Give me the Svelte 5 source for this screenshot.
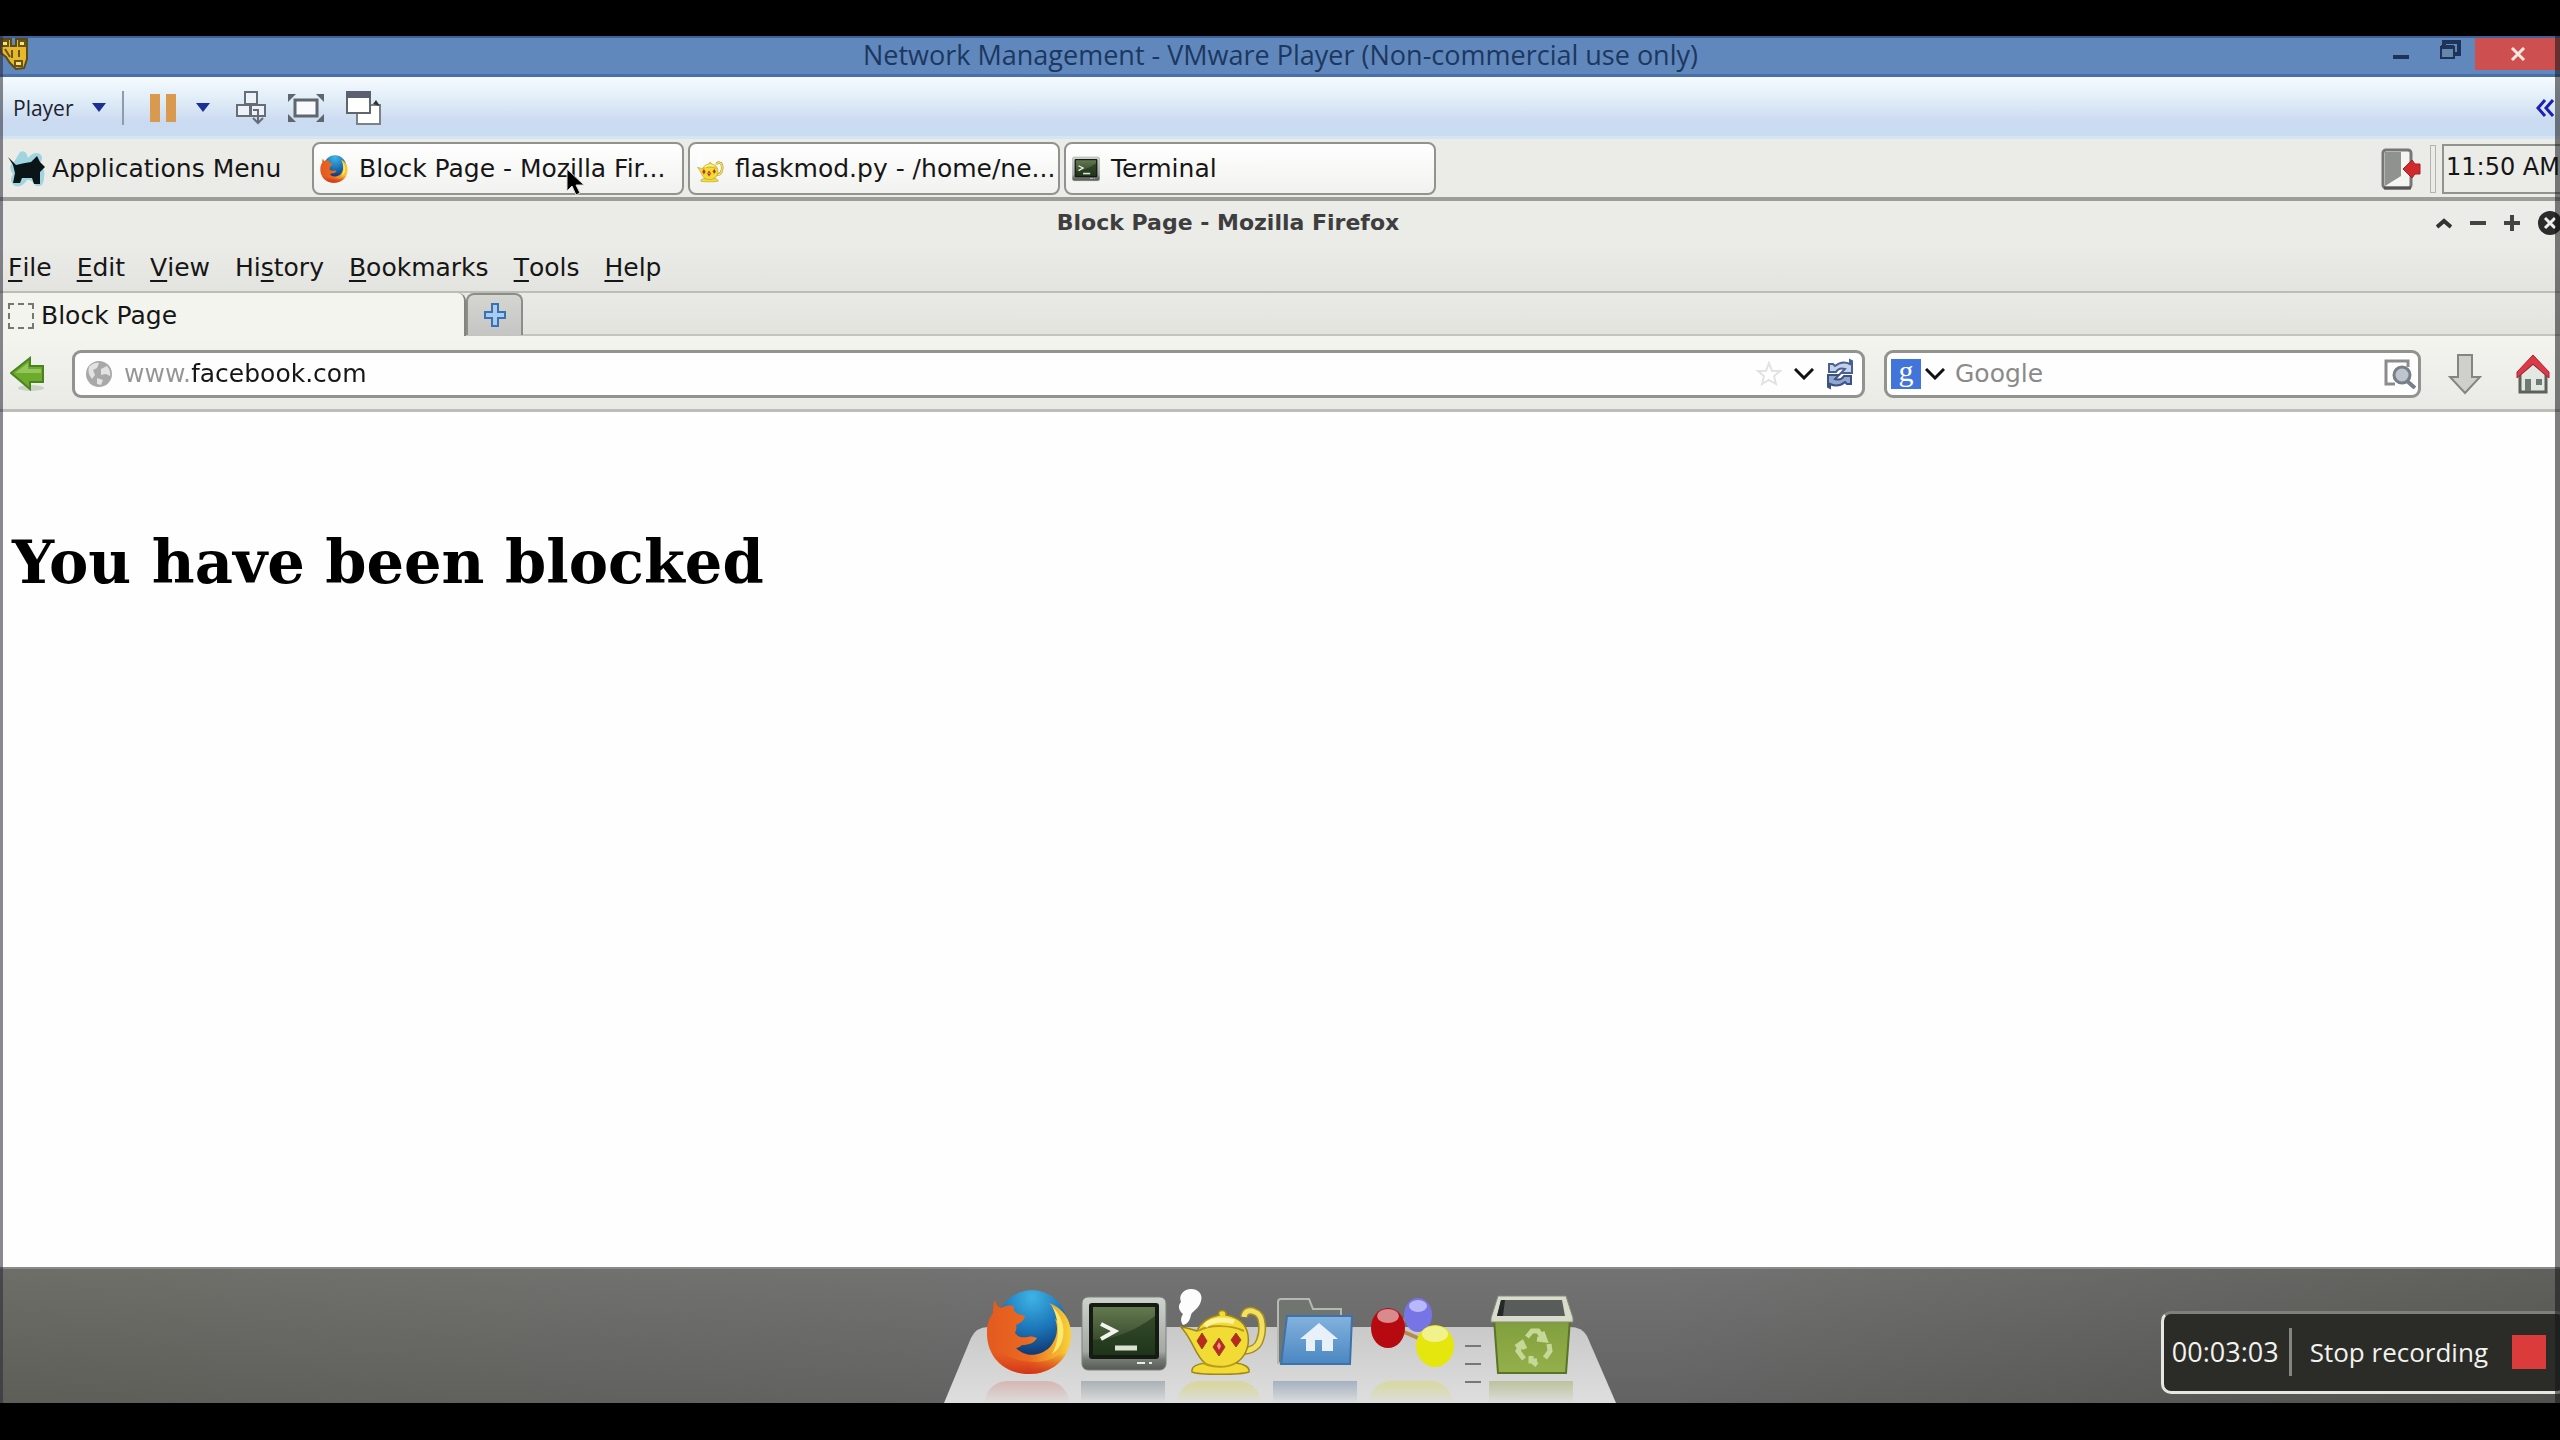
<script>
  const menus = [
    ['', 'F', 'ile'],
    ['', 'E', 'dit'],
    ['', 'V', 'iew'],
    ['Hi', 's', 'tory'],
    ['', 'B', 'ookmarks'],
    ['', 'T', 'ools'],
    ['', 'H', 'elp']
  ];
  let url = $state('www.facebook.com');
  let query = $state('');
</script>

{#snippet firefox()}
  <svg viewBox="0 0 86 86" aria-hidden="true">
    <defs>
      <radialGradient id="ffGlobe" cx=".5" cy=".1" r=".95"><stop offset="0" stop-color="#3fb4e6" /><stop offset=".5" stop-color="#1b74b8" /><stop offset="1" stop-color="#0e2358" /></radialGradient>
      <linearGradient id="ffFur" x1="0" y1="0" x2="1" y2="0"><stop offset="0" stop-color="#e4591f" /><stop offset=".5" stop-color="#ea6a22" /><stop offset=".8" stop-color="#f4ab2c" /><stop offset="1" stop-color="#f6d33c" /></linearGradient>
      <linearGradient id="ffLow" x1="0" y1="0" x2="0" y2="1"><stop offset=".5" stop-color="#d93a1c" stop-opacity="0" /><stop offset="1" stop-color="#cf3418" /></linearGradient>
    </defs>
    <circle cx="46" cy="36" r="35" fill="url(#ffGlobe)" />
    <path d="M9 11c1 5 3 7 6 8 5-3 9-3 13-2-1 4 0 6 4 8 3 1 5 1 7 2-1 5-5 7-9 9 1 3 0 5-1 8 3 4 7 5 13 4 3-1 6 0 9 1-3 5-8 7-15 7-2 2-4 3-6 3 10 10 24 8 33 0 8-8 10-20 6-29 2 1 3 3 4 5-1-9-4-15-10-21C76 19 86 30 85 48c-2 24-21 37-42 37C17 85 0 67 1 42c0-8 3-14 6-18 0-5 0-9 2-13z" fill="url(#ffFur)" />
    <path d="M1 42c0 26 18 43 42 43 21 0 40-13 42-37-6 16-18 25-36 25C27 73 10 64 1 42z" fill="url(#ffLow)" />
    <path d="M66 17c9 9 13 20 11 31-1 7-5 13-11 17 7-12 9-30 0-48z" fill="#fbe96b" />
  </svg>
{/snippet}

{#snippet terminal()}
  <svg viewBox="0 0 86 76" aria-hidden="true">
    <defs>
      <linearGradient id="tCase" x1="0" y1="0" x2="0" y2="1"><stop offset="0" stop-color="#cfd3cf" /><stop offset=".75" stop-color="#a3a8a3" /><stop offset=".86" stop-color="#747974" /><stop offset="1" stop-color="#555a55" /></linearGradient>
      <linearGradient id="tGlass" x1="0" y1="0" x2="0" y2="1"><stop offset="0" stop-color="#64794f" /><stop offset="1" stop-color="#25391f" /></linearGradient>
    </defs>
    <rect x="1" y="1" width="84" height="73" rx="6" fill="url(#tCase)" stroke="#7d817d" />
    <rect x="8" y="7" width="70" height="56" rx="3" fill="#151b12" />
    <rect x="12" y="11" width="62" height="48" fill="url(#tGlass)" />
    <path d="M12 59V44c22-1 42-9 62-24v39z" fill="#1d3318" opacity=".6" />
    <path d="M20 28l14 7-14 8" fill="none" stroke="#f2f5ee" stroke-width="4" />
    <path d="M34 52h22" stroke="#dbe2d2" stroke-width="5" />
    <path d="M56 67h8m4 0h3" stroke="#e8ece4" stroke-width="2" />
  </svg>
{/snippet}

{#snippet teapot()}
  <svg viewBox="0 0 92 86" aria-hidden="true">
    <path d="M7 36c-3-4-2-8 0-11-5-4-5-9-2-12-3-7 3-13 10-13 8 0 12 6 10 12-2 8-9 10-10 14-1 5-3 9-8 10z" fill="#fdfdfd" />
    <path d="M68 28c1-7 6-7 11-5 9 3 8 20 5 28-2 7-9 11-18 11" fill="none" stroke="#a58e20" stroke-width="8" />
    <path d="M68 28c1-7 6-7 11-5 9 3 8 20 5 28-2 7-9 11-18 11" fill="none" stroke="#f3df62" stroke-width="5" />
    <path d="M5 38c9 1 11 3 16 4 4-9 12-14 22-16-3-6 9-6 7 0 11 2 20 8 22 20 2 13-4 23-12 28 8 1 14 4 13 9-9 3-50 3-57 0-1-6 6-8 13-9C20 68 17 51 5 38z" fill="#f3db36" stroke="#9f861c" stroke-width="1.5" />
    <path d="M22 42c12-7 33-6 46 0M27 74c11 5 24 5 33 0" fill="none" stroke="#ba9b1d" stroke-width="2" />
    <path d="M29 37c6-6 18-8 29-4" fill="none" stroke="#fcf39b" stroke-width="5" />
    <path d="M26 44l5 8-5 8-5-8zM43 49l6 9-6 9-6-9zM60 44l5 7-5 7-5-7z" fill="#bd2920" stroke="#8d4a18" />
    <path d="M43 53l2 4-2 4-2-4z" fill="#f29a91" />
  </svg>
{/snippet}

{#snippet folder()}
  <svg viewBox="0 0 76 68" aria-hidden="true">
    <defs><linearGradient id="fold" x1="0" y1="0" x2="0" y2="1"><stop offset="0" stop-color="#83b2de" /><stop offset="1" stop-color="#4b87c2" /></linearGradient></defs>
    <path d="M1 65V4q0-3 3-3h28l4 10h28v54z" fill="#70756f" stroke="#b5b9b4" stroke-width="2" />
    <path d="M10 18h65l-2 48H4z" fill="url(#fold)" stroke="#3d72aa" stroke-width="2" />
    <path d="M42 25l19 16h-5v12H45V42h-7v11H29V41h-6z" fill="#e8f1fa" />
  </svg>
{/snippet}

{#snippet balls()}
  <svg viewBox="0 0 86 72" aria-hidden="true">
    <path d="M20 28l42 18M20 28l28-12M48 16l14 30" stroke="#b88a50" stroke-width="4" />
    <ellipse cx="48" cy="17" rx="14" ry="17" fill="#7775e6" /><ellipse cx="48" cy="8" rx="9" ry="6" fill="#b9b8fa" />
    <ellipse cx="18" cy="30" rx="17" ry="20" fill="#b70a10" /><ellipse cx="18" cy="18" rx="11" ry="7" fill="#d98a8c" />
    <ellipse cx="65" cy="48" rx="19" ry="21" fill="#e5e60d" /><ellipse cx="65" cy="36" rx="13" ry="8" fill="#f2f28d" />
  </svg>
{/snippet}

{#snippet trash()}
  <svg viewBox="0 0 84 80" aria-hidden="true">
    <defs><linearGradient id="bin" x1="0" y1="0" x2="0" y2="1"><stop offset="0" stop-color="#819e3d" /><stop offset="1" stop-color="#93b04b" /></linearGradient></defs>
    <path d="M4 24h76l-4 54H8z" fill="url(#bin)" stroke="#5a7328" stroke-width="2" />
    <path d="M8 1h68l7 22v4H1v-4z" fill="#d9dccb" stroke="#878a7b" />
    <path d="M11 5h61l3 16H7z" fill="#585d5c" /><path d="M11 5l-4 16h6l2-16z" fill="#252828" />
    <path d="M37 42l5-6h6l5 7m-1-6l3 8-8-1M59 49l1 7-5 7M47 66h-6v-5m1 5l5 4M34 64l-6-8 3-6m-5 2l6-4 3 6" fill="none" stroke="#c5d895" stroke-width="5" />
  </svg>
{/snippet}

{#snippet caret()}
  <svg class="caret" viewBox="0 0 14 9" aria-hidden="true"><path d="M0 0h14L7 9z" fill="#1c2f94" /></svg>
{/snippet}

{#snippet chevron()}
  <svg class="chev" viewBox="0 0 20 12" aria-hidden="true"><path d="M1 1l9 9 9-9" fill="none" stroke="#111" stroke-width="3" /></svg>
{/snippet}

<div class="screen">
  <div class="host">
    <header class="titlebar">
      <svg class="vm" viewBox="0 0 28 32" aria-hidden="true">
        <path d="M0 1h11v7h5V1h11v20l-3 9-8 1-6-6-4-6-5-4z" fill="#e6b92d" stroke="#5a4a1c" stroke-width="2" />
        <path d="M2 3h6v5H2zM19 3h6v5h-6zM15 23h7v5h-7zM5 11l5 8M12 12v8M19 12v7" fill="#f8e27a" stroke="#6a5415" stroke-width="2" />
      </svg>
      <h1>Network Management - VMware Player (Non-commercial use only)</h1>
      <div class="winbtns">
        <button aria-label="Minimize"><svg viewBox="0 0 16 20"><path d="M0 15h16v4H0z" fill="#1e3357" /></svg></button>
        <button aria-label="Restore"><svg class="restore" viewBox="0 0 22 20"><path d="M5 5V2h15v12h-4" fill="none" stroke="#1e3357" stroke-width="4" /><path d="M2 7h13v11H2z" fill="#6587ac" stroke="#1e3357" stroke-width="2" /><path d="M2 7h13" stroke="#1e3357" stroke-width="4" /></svg></button>
        <button class="close" aria-label="Close"><svg viewBox="0 0 16 14"><path d="M2 1l12 12M14 1L2 13" stroke="#fbe6df" stroke-width="3" /></svg></button>
      </div>
    </header>

    <div class="toolbar">
      <button class="player">Player {@render caret()}</button>
      <span class="sep"></span>
      <button class="pause" aria-label="Suspend">
        <svg class="bars" viewBox="0 0 26 28"><path d="M0 0h10v28H0zM16 0h10v28H16z" fill="#d99a50" /></svg>
        {@render caret()}
      </button>
      <button aria-label="Send Ctrl+Alt+Del"><svg class="t1" viewBox="0 0 30 34"><path d="M9 1h12v12H9zM1 14h13v11H1zM15 14h14v11H15z" fill="#edf2f8" stroke="#666d76" stroke-width="2" /><path d="M17 19h5v12m-5-4l5 5 5-5" fill="none" stroke="#666d76" stroke-width="2" /></svg></button>
      <button aria-label="Full screen"><svg class="t2" viewBox="0 0 36 28"><path d="M7 6h22v16H7z" fill="#f8fafd" stroke="#5f666e" stroke-width="3" /><path d="M0 0h8L0 8zM36 0h-8l8 8zM0 28h8l-8-8zM36 28h-8l8-8z" fill="#5f666e" /></svg></button>
      <button aria-label="Unity"><svg class="t3" viewBox="0 0 36 34"><path d="M11 14h23v19H11z" fill="#fff" stroke="#7a8189" stroke-width="2" /><path d="M1 1h23v21H1z" fill="#fff" stroke="#5f666e" stroke-width="2" /><path d="M0 0h25v7H0z" fill="#5b5f70" /><path d="M27 13l3-4 4 6z" fill="#333" /></svg></button>
      <button class="collapse" aria-label="Collapse toolbar"><svg viewBox="0 0 18 18"><path d="M9 1L2 9l7 8M17 1l-7 8 7 8" fill="none" stroke="#1b1fb4" stroke-width="3" /></svg></button>
    </div>

    <nav class="panel">
      <button class="apps">
        <svg class="xfce" viewBox="0 0 38 38" aria-hidden="true"><path d="M12 2q6-3 8 6 6-7 12-4 5 4-1 10 7 5 5 13 0 11-8 9-4-7-9-6-5 8-12 6-7-4-2-12Q-1 16 6 12z" fill="#9fd5de" /><path d="M0 7l8 8q8-2 15-3l6-6 3 6 5 5-5 5v12h-6l-2-6H14l-2 5H5l2-10-2-8z" fill="#0b1417" /></svg>
        Applications Menu
      </button>
      <div class="tasks">
        <button class="task"><span class="ico">{@render firefox()}</span><span>Block Page - Mozilla Fir...</span></button>
        <button class="task"><span class="ico">{@render teapot()}</span><span>flaskmod.py - /home/ne...</span></button>
        <button class="task"><span class="ico">{@render terminal()}</span><span>Terminal</span></button>
      </div>
      <button class="door" aria-label="Log out"><svg viewBox="0 0 40 42"><rect x="2" y="2" width="28" height="38" rx="3" fill="#f4f4f1" stroke="#777" stroke-width="3" /><path d="M4 4h16v24L4 38z" fill="#8f928e" /><path d="M3 40h27" stroke="#555" stroke-width="3" /><path d="M22 21l9-9 3 4h5v10h-5l-3 4z" fill="#d02a2e" stroke="#a81e22" /></svg></button>
      <span class="grip"></span>
      <time class="clock">11:50 AM</time>
    </nav>

    <section class="browser">
      <div class="fftitle">
        <h2>Block Page - Mozilla Firefox</h2>
        <div class="ffbtns">
          <button aria-label="Shade"><svg viewBox="0 0 16 16"><path d="M1 12l7-6 7 6" fill="none" stroke="#333" stroke-width="4" /></svg></button>
          <button aria-label="Minimize window"><svg viewBox="0 0 16 16"><path d="M0 8h16" stroke="#444" stroke-width="4" /></svg></button>
          <button aria-label="Maximize window"><svg viewBox="0 0 16 16"><path d="M0 8h16M8 0v16" stroke="#444" stroke-width="4" /></svg></button>
          <button aria-label="Close window"><svg class="big" viewBox="0 0 24 24"><circle cx="12" cy="12" r="12" fill="#2b2b2b" /><path d="M7 7l10 10M17 7L7 17" stroke="#eee" stroke-width="3" /></svg></button>
        </div>
      </div>

      <div class="menubar">
        {#each menus as [pre, key, post]}
          <button>{pre}<u>{key}</u>{post}</button>
        {/each}
      </div>

      <div class="tabs">
        <button class="tab"><span class="blank"></span>Block Page</button>
        <button class="newtab" aria-label="New tab"><svg viewBox="0 0 24 26"><path d="M9 2h6v8h7v6h-7v8H9v-8H2v-6h7z" fill="#a9cdf0" stroke="#3a71b4" stroke-width="2" /></svg></button>
      </div>

      <div class="nav">
        <button class="back" aria-label="Back"><svg viewBox="0 0 36 36"><ellipse cx="21" cy="32" rx="13" ry="3" fill="#ccd2c4" /><path d="M1 17L20 2v8h13v16H20v7z" fill="#6cab2c" stroke="#4b8220" stroke-width="2" /><path d="M5 17L18 7v6h13v4z" fill="#93c65b" /></svg></button>
        <div class="field url">
          <svg class="globe" viewBox="0 0 26 26" aria-hidden="true"><circle cx="13" cy="13" r="13" fill="#a8a8a8" /><path d="M3 6q5-5 10-4l-2 5-4 2 2 5-3 4Q1 12 3 6zM15 8l6-3q4 5 3 10l-4-2-5 1zM11 17l6 2-2 5-4-1z" fill="#e2e2e2" /></svg>
          <input aria-label="Address" bind:value={url} />
          <button aria-label="Bookmark"><svg class="star" viewBox="0 0 26 26"><path d="M13 2l3 8h8l-6 5 2 8-7-4-7 4 2-8-6-5h8z" fill="#fff" stroke="#e2e2e2" stroke-width="2" /></svg></button>
          <button aria-label="History">{@render chevron()}</button>
          <button aria-label="Reload"><svg class="reload" viewBox="0 0 28 32"><path d="M3 14V6h4l2 2q7-6 15-2V2l2 1v12h-11l4-4q-6-2-9 3z" fill="#c3d1ea" stroke="#4a6090" stroke-width="2" /><path d="M25 18v8h-4l-2-2q-7 6-15 2v4l-2-1V17h11l-4 4q6 2 9-3z" fill="#8fa6d0" stroke="#3d5283" stroke-width="2" /></svg></button>
        </div>
        <div class="field search">
          <button class="engine" aria-label="Search engine"><span class="g">g</span>{@render chevron()}</button>
          <input aria-label="Search" placeholder="Google" bind:value={query} />
          <button aria-label="Search the web"><svg class="find" viewBox="0 0 32 30"><path d="M24 8V2H2v23h9" fill="none" stroke="#8c8c8c" stroke-width="3" /><circle cx="18" cy="16" r="8" fill="#bfc5cd" stroke="#777f8b" stroke-width="3" /><path d="M23 22l8 7" stroke="#777f8b" stroke-width="4" /></svg></button>
        </div>
        <button class="down" aria-label="Downloads"><svg viewBox="0 0 34 42"><path d="M10 2h14v22h8L17 40 2 24h8z" fill="#cfd0cc" stroke="#84857f" stroke-width="2" /></svg></button>
        <button class="home" aria-label="Home"><svg viewBox="0 0 34 40"><path d="M4 20L17 9l13 11v18H4z" fill="#e4e8e2" stroke="#5c625b" stroke-width="3" /><path d="M9 25h6v12H9zM20 25h6v6h-6z" fill="#6e7b74" /><path d="M1 18L17 1l16 17v6L17 10 1 24z" fill="#dc3a48" stroke="#ad2433" /></svg></button>
      </div>

      <main class="page"><h3>You have been blocked</h3></main>
    </section>

    <footer class="desktop">
      <div class="dock">
        <svg class="shelf" viewBox="0 0 672 76" preserveAspectRatio="none" aria-hidden="true">
          <defs><linearGradient id="shelfFill" x1="0" y1="0" x2="0" y2="1"><stop offset="0" stop-color="#c9c9c9" /><stop offset="1" stop-color="#dedede" /></linearGradient></defs>
          <path d="M0 76L27 11Q32 0 44 0H626q12 0 17 9L672 76z" fill="url(#shelfFill)" />
        </svg>
        <div class="launchers">
          <button class="w86" aria-label="Firefox">{@render firefox()}</button>
          <button class="w86" aria-label="Terminal emulator">{@render terminal()}</button>
          <button class="w92" aria-label="Teapot">{@render teapot()}</button>
          <button class="w76" aria-label="Home folder">{@render folder()}</button>
          <button class="w86 orbs" aria-label="Settings">{@render balls()}</button>
          <span class="ticks"></span>
          <button class="w84" aria-label="Trash">{@render trash()}</button>
        </div>
        <div class="glow" aria-hidden="true">
          <i class="red"></i><i class="slate"></i><i class="gold"></i><i class="blue"></i><i class="lime"></i><i class="green"></i>
        </div>
      </div>
      <div class="recorder">
        <time>00:03:03</time>
        <span class="rule"></span>
        <button>Stop recording <span class="stop"></span></button>
      </div>
    </footer>

    <svg class="pointer" viewBox="0 0 20 28" aria-hidden="true"><path d="M1 1v22l5-5 4 9 4-2-4-8h8z" fill="#000" stroke="#ddd" /></svg>
  </div>
</div>

<style>
  :global(body) { background: #000; }
  .screen {
    box-sizing: border-box;
    min-height: 100vh;
    padding: 36px 0 37px;
    display: flex;
    background: #000;
    font-family: "DejaVu Sans", sans-serif;
    font-size: 25px;
    line-height: 30px;
    color: #161616;
    overflow: hidden;
  }
  .host { position: relative; flex: 1; min-width: 0; display: flex; flex-direction: column; overflow: hidden; }
  .host::before, .host::after { content: ""; position: absolute; top: 0; bottom: 0; z-index: 3; pointer-events: none; }
  .host::before { left: 0; width: 3px; background: rgb(40 40 55 / 55%); }
  .host::after { right: 0; width: 5px; background: rgb(20 24 24 / 55%); }
  svg { display: block; }
  button { font: inherit; color: inherit; background: none; border: 0; padding: 0; margin: 0; display: flex; align-items: center; flex: none; }
  h1, h2, h3 { margin: 0; }

  .titlebar { height: 41px; box-sizing: border-box; border-top: 2px solid #3f629a; border-bottom: 3px solid #4a70ac; background: #6088bc; display: flex; align-items: flex-start; justify-content: space-between; }
  .vm { width: 28px; height: 32px; }
  .titlebar h1 { flex: 1; padding-left: 140px; text-align: center; font: 400 27px/34px "Open Sans", sans-serif; color: #1c3760; white-space: nowrap; }
  .winbtns { display: flex; }
  .winbtns svg { width: 16px; height: 20px; }
  .winbtns svg.restore { width: 22px; }
  .winbtns button { height: 24px; margin-right: 30px; }
  .winbtns button:nth-child(2) { margin-right: 14px; }
  .winbtns button.close { width: 85px; height: 32px; margin: 0; box-sizing: border-box; background: #cd4f4f; justify-content: center; }
  .winbtns .close svg { height: 14px; }

  .toolbar { height: 62px; box-sizing: border-box; padding: 2px 6px 0 13px; border-bottom: 3px solid #d4e4f2; background: linear-gradient(#f6fbff, #dceaf6 45%, #cbdaf1 75%, #c8dcf2); display: flex; align-items: center; gap: 22px; }
  .caret { width: 14px; height: 9px; }
  .player { gap: 18px; font: 400 21px/28px "Open Sans", sans-serif; color: #1d2230; }
  .sep { width: 2px; height: 34px; background: #8d9bb0; margin-left: -6px; }
  .pause { gap: 20px; margin: 0 4px; }
  .bars { width: 26px; height: 28px; }
  .t1 { width: 30px; height: 34px; }
  .t2 { width: 36px; height: 28px; }
  .t3 { width: 36px; height: 34px; }
  .collapse { margin-left: auto; }
  .collapse svg { width: 18px; height: 18px; }

  .panel { height: 62px; box-sizing: border-box; padding: 4px 0 3px 8px; border-bottom: 4px solid #9c9c98; background: #ebebe8; display: flex; align-items: center; }
  .apps { gap: 6px; width: 304px; white-space: nowrap; }
  .xfce { width: 38px; height: 38px; }
  .tasks { display: flex; gap: 4px; flex: 1; min-width: 0; }
  .task { width: 372px; height: 53px; box-sizing: border-box; padding: 0 6px; gap: 11px; border: 2px solid #92928e; border-radius: 8px; background: linear-gradient(#fff, #f1f1ef); white-space: nowrap; }
  .ico { width: 28px; }
  .ico :global(svg) { width: 28px; height: 36px; }
  .door svg { width: 40px; height: 42px; }
  .grip { width: 4px; height: 46px; margin: 0 6px 0 9px; border: 1px solid #b3b3af; }
  .clock { width: 118px; height: 50px; box-sizing: border-box; border: 2px solid #92928e; border-right: 0; padding-left: 2px; font-size: 24px; line-height: 42px; white-space: nowrap; }

  .browser { flex: 1; display: flex; flex-direction: column; background: #ebebe8; }
  .fftitle { height: 44px; padding-left: 20px; display: flex; align-items: center; }
  .fftitle h2 { flex: 1; text-align: center; font-size: 22px; line-height: 28px; color: #3e3e3e; }
  .ffbtns { display: flex; gap: 18px; align-items: center; }
  .ffbtns svg { width: 16px; height: 16px; }
  .ffbtns svg.big { width: 24px; height: 24px; margin-right: -2px; }
  .menubar { height: 46px; padding-left: 8px; display: flex; gap: 25px; align-items: center; background: linear-gradient(#ebebe8, #e3e3df); border-bottom: 2px solid #bdbdb8; }
  u { text-decoration-thickness: 2px; text-underline-offset: 4px; }
  .tabs { height: 43px; box-sizing: border-box; display: flex; background: linear-gradient(#e9e9e6, #e3e3de); border-bottom: 2px solid #c4c4be; }
  .tab { width: 466px; height: 43px; padding: 2px 0 0 8px; gap: 7px; box-sizing: border-box; background: #f4f4ef; border-radius: 0 8px 0 0; border-right: 2px solid #84847f; }
  .blank { width: 26px; height: 26px; box-sizing: border-box; border: 2px dashed #77776f; }
  .newtab { width: 57px; height: 42px; box-sizing: border-box; justify-content: center; border: 2px solid #8d8d88; border-bottom: 0; border-radius: 8px 8px 0 0; background: linear-gradient(#d5d5d2, #c5c5c3); }
  .newtab svg { width: 24px; height: 26px; }
  .nav { height: 76px; box-sizing: border-box; padding: 2px 10px 0 10px; display: flex; align-items: center; background: linear-gradient(#f4f4ef, #e9e9e6); border-bottom: 3px solid #bdbdb8; }
  .back svg { width: 36px; height: 36px; }
  .field { height: 48px; box-sizing: border-box; border: 3px solid #92928e; border-radius: 9px; background: #fefefe; display: flex; align-items: center; }
  .field input { flex: 1; min-width: 0; border: 0; padding: 0; outline: 0; font: inherit; line-height: 30px; background: none; }
  .url { flex: 1; margin: 0 19px 0 26px; padding: 0 8px 0 11px; gap: 12px; }
  .url input { color: transparent; background: linear-gradient(90deg, #959595 68px, #161616 68px); background-clip: text; -webkit-background-clip: text; }
  .globe, .star { width: 26px; height: 26px; }
  .chev { width: 20px; height: 12px; }
  .reload { width: 28px; height: 32px; }
  .search { width: 537px; padding: 0 2px 0 4px; gap: 10px; }
  .search input::placeholder { color: #8a8a8a; opacity: 1; }
  .engine { gap: 4px; }
  .g { width: 30px; height: 30px; background: #4275dc; color: #fff; font: 400 30px/24px "Liberation Serif", serif; text-align: center; }
  .find { width: 32px; height: 30px; }
  .down { margin: 0 34px 0 27px; }
  .down svg { width: 34px; height: 42px; }
  .home svg { width: 34px; height: 40px; }
  .page { flex: 1; background: #fefefe; padding: 117px 12px 0; }
  .page h3 { font: 700 59px/68px "DejaVu Serif", serif; color: #000; }

  .desktop { position: relative; height: 136px; box-sizing: border-box; border-top: 2px solid #8a8a8a; background: linear-gradient(rgb(255 255 255 / 5%), rgb(0 0 0 / 8%)), linear-gradient(90deg, #666660, #6b6b6b 40%, #6b6b6b 65%, #575753); display: flex; justify-content: center; align-items: flex-end; }
  .dock { position: relative; width: 672px; height: 116px; }
  .shelf { position: absolute; left: 0; bottom: 0; width: 100%; height: 76px; }
  .launchers { position: relative; display: flex; align-items: flex-end; gap: 9px; height: 88px; padding-left: 42px; }
  .launchers button { justify-content: center; }
  .launchers button :global(svg) { width: 100%; }
  .w86 { width: 86px; }
  .w92 { width: 92px; }
  .w76 { width: 76px; }
  .w84 { width: 84px; }
  .orbs { margin-left: 8px; }
  .ticks { width: 16px; height: 38px; margin-bottom: -8px; background: repeating-linear-gradient(#777 0 2px, transparent 2px 18px); }
  .launchers button:nth-child(2) { padding-bottom: 3px; }
  .launchers button:nth-child(4) { padding-bottom: 9px; }
  .launchers button:nth-child(5) { padding-bottom: 5px; }
  .glow { position: absolute; left: 41px; bottom: 0; display: flex; gap: 12px; opacity: .6; }
  .glow i { width: 84px; height: 22px; background: linear-gradient(var(--c), transparent); }
  .red { --c: #d3a19a; border-radius: 40px 40px 0 0; }
  .slate { --c: #8b979d; }
  .gold { --c: #d9d56f; border-radius: 30px 30px 0 0; }
  .blue { --c: #8298b3; }
  .lime { --c: #d7da78; border-radius: 30px 30px 0 0; }
  .glow .green { --c: #a9b573; margin-left: 24px; }
  .recorder { position: absolute; right: -7px; bottom: 9px; height: 83px; box-sizing: border-box; padding: 0 18px 2px 8px; border: 3px solid #e6e6e2; border-top-color: #80807b; border-radius: 10px; background: #2b2c28; color: #f2f2ee; display: flex; align-items: center; gap: 10px; font: 400 27px/36px "Open Sans", sans-serif; white-space: nowrap; }
  .rule { width: 3px; height: 48px; background: #858580; }
  .recorder button { gap: 24px; font-size: 26px; margin-left: 8px; }
  .stop { width: 34px; height: 34px; background: #dc3b3b; }
  .pointer { position: absolute; left: 566px; top: 132px; width: 20px; height: 28px; z-index: 4; }
</style>
